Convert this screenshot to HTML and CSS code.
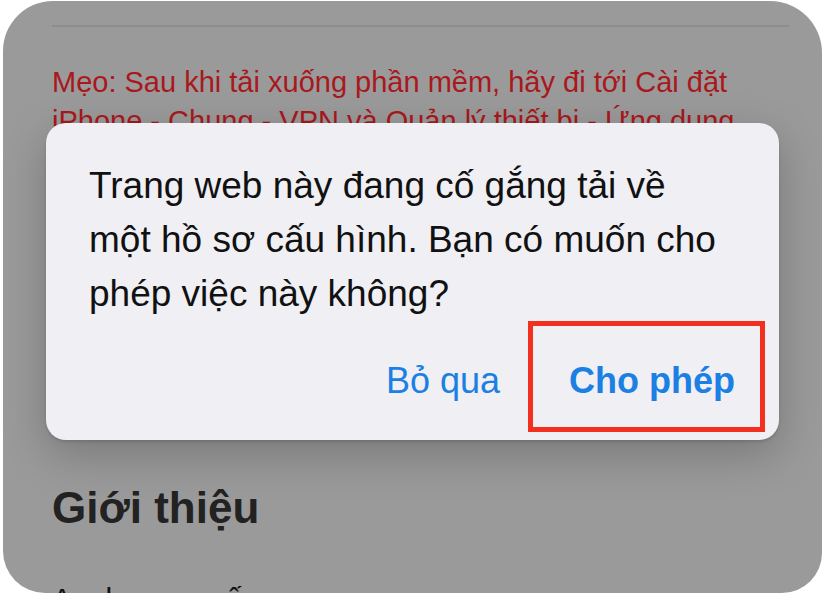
FILE: index.html
```html
<!DOCTYPE html>
<html lang="vi">
<head>
<meta charset="utf-8">
<title>Cấu hình</title>
<link rel="stylesheet" href="styles.css">
</head>
<body>
<div class="screen">
  <div class="page">
    <div class="divider"></div>
    <p class="tip">Mẹo: Sau khi tải xuống phần mềm, hãy đi tới Cài đặt iPhone - Chung - VPN và Quản lý thiết bị - Ứng dụng doanh nghiệp để tin cậy.</p>
    <h2 class="heading">Giới thiệu</h2>
    <p class="body-text">Apple cung cấp</p>
  </div>
  <div class="alert">
    <p class="alert-msg">Trang web này đang cố gắng tải về một hồ sơ cấu hình. Bạn có muốn cho phép việc này không?</p>
    <div class="alert-actions">
      <span class="btn">Bỏ qua</span>
      <span class="btn btn-strong">Cho phép</span>
    </div>
  </div>
  <div class="highlight"></div>
</div>
</body>
</html>
```

FILE: styles.css
```css
html, body {
  margin: 0;
  padding: 0;
  background: #ffffff;
}
body {
  width: 823px;
  height: 595px;
  overflow: hidden;
  font-family: "Liberation Sans", Arial, sans-serif;
}
.screen {
  position: relative;
  margin: 1px 1px 0 3px;
  height: 592px;
  border-radius: 50px 52px 40px 42px;
  overflow: hidden;
  background: #9a9a9a;
}
.page {
  padding: 24px 33px 0 49px;
}
.divider {
  height: 2px;
  background: #8d8d8d;
}
.tip {
  margin: 36px 0 0 0;
  color: #a8181c;
  font-size: 29px;
  line-height: 39px;
  width: 700px;
}
.heading {
  margin: 302px 0 0 0;
  font-size: 44px;
  line-height: 52px;
  font-weight: 700;
  color: #222222;
}
.body-text {
  margin: 47px 0 0 0;
  font-size: 30px;
  line-height: 36px;
  color: #111111;
}
.alert {
  position: absolute;
  left: 43px;
  top: 122px;
  width: 733px;
  height: 317px;
  box-sizing: border-box;
  border-radius: 20px;
  background: #efeff4;
  box-shadow: 0 2px 3px rgba(0, 0, 0, 0.12), 0 14px 44px rgba(0, 0, 0, 0.22);
  padding: 36px 44px 0 43px;
  display: flex;
  flex-direction: column;
}
.alert-msg {
  margin: 0;
  font-size: 37px;
  line-height: 54px;
  color: #111111;
}
.alert-actions {
  margin-top: 38px;
  display: flex;
  justify-content: flex-end;
  gap: 69px;
}
.btn {
  font-size: 36px;
  line-height: 44px;
  color: #1b7fe3;
}
.btn-strong {
  font-weight: 700;
}
.highlight {
  position: absolute;
  left: 525px;
  top: 320px;
  width: 237px;
  height: 111px;
  box-sizing: border-box;
  border: 5px solid #f3301f;
}
```
